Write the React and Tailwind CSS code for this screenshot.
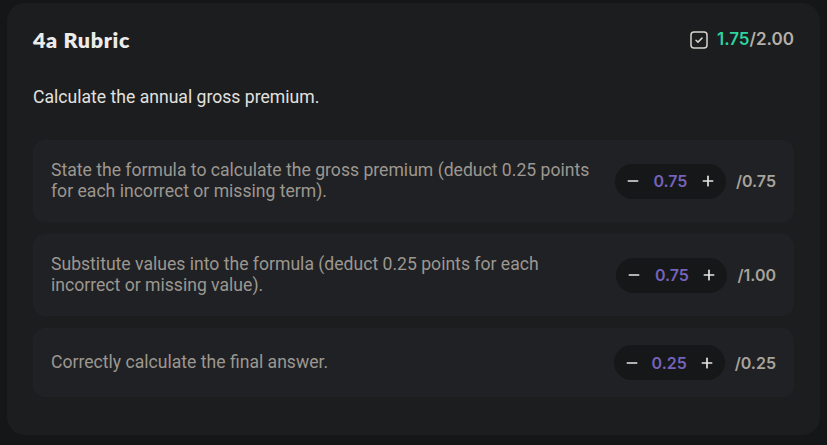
import { Minus, Plus } from "lucide-react";

const criteria = [
  {
    text: "State the formula to calculate the gross premium (deduct 0.25 points for each incorrect or missing term).",
    value: "0.75",
    max: "0.75",
  },
  {
    text: "Substitute values into the formula (deduct 0.25 points for each incorrect or missing value).",
    value: "0.75",
    max: "1.00",
  },
  {
    text: "Correctly calculate the final answer.",
    value: "0.25",
    max: "0.25",
  },
];

const CheckBox = () => (
  <svg width="18" height="18" viewBox="0 0 18 18" fill="none">
    <rect x="1" y="1" width="16" height="16" rx="3" stroke="#d6d3ce" strokeWidth="1.5" />
    <path d="M6 9.2l2 1.9 4-4" stroke="#d6d3ce" strokeWidth="1.5" strokeLinecap="round" strokeLinejoin="round" />
  </svg>
);

const Stepper = ({ value }) => (
  <div className="flex items-center justify-between h-[35px] w-[111px] px-[10px] rounded-full bg-[#161718]">
    <Minus className="w-4 h-4 text-[#e8e6e3]" strokeWidth={2.5} />
    <span className="text-[16px] font-semibold text-[#7562b9] font-['Inter',sans-serif]">{value}</span>
    <Plus className="w-4 h-4 text-[#e8e6e3]" strokeWidth={2.5} />
  </div>
);

export default function App() {
  return (
    <div className="min-h-[445px] bg-[#151617] pt-[3px] px-[7px] pb-[8px] font-['Roboto',sans-serif]">
      <div className="rounded-[18px] bg-[#1c1d1f] px-[26px] pt-[23px] pb-[38px]">
        {/* Header */}
        <div className="flex items-center justify-between h-[28px]">
          <h2 className="text-[21.5px] font-extrabold text-[#ecebe9] font-['Lato',sans-serif] tracking-[0.03em]">
            4a Rubric
          </h2>
          <div className="flex items-center gap-[9px] font-['Inter',sans-serif] text-[17px] font-semibold">
            <CheckBox />
            <span>
              <span className="text-[#2dd4a0]">1.75</span>
              <span className="text-[#b4afa8]">/2.00</span>
            </span>
          </div>
        </div>

        <p className="mt-[33px] text-[17.6px] leading-[21px] text-[#e2e1df]">
          Calculate the annual gross premium.
        </p>

        {/* Criteria */}
        <div className="mt-[32px] flex flex-col gap-3">
          {criteria.map((c) => (
            <div
              key={c.text}
              className="flex items-center justify-between gap-6 rounded-xl border border-[#212225] bg-[#202124] px-[17px] py-4"
            >
              <p className="max-w-[555px] py-[3px] text-[17.6px] leading-[21px] text-[#9c9790]">{c.text}</p>
              <div className="flex items-center gap-[10px] shrink-0">
                <Stepper value={c.value} />
                <span className="text-[16px] font-semibold text-[#a8a39b] font-['Inter',sans-serif]">
                  /{c.max}
                </span>
              </div>
            </div>
          ))}
        </div>
      </div>
    </div>
  );
}
